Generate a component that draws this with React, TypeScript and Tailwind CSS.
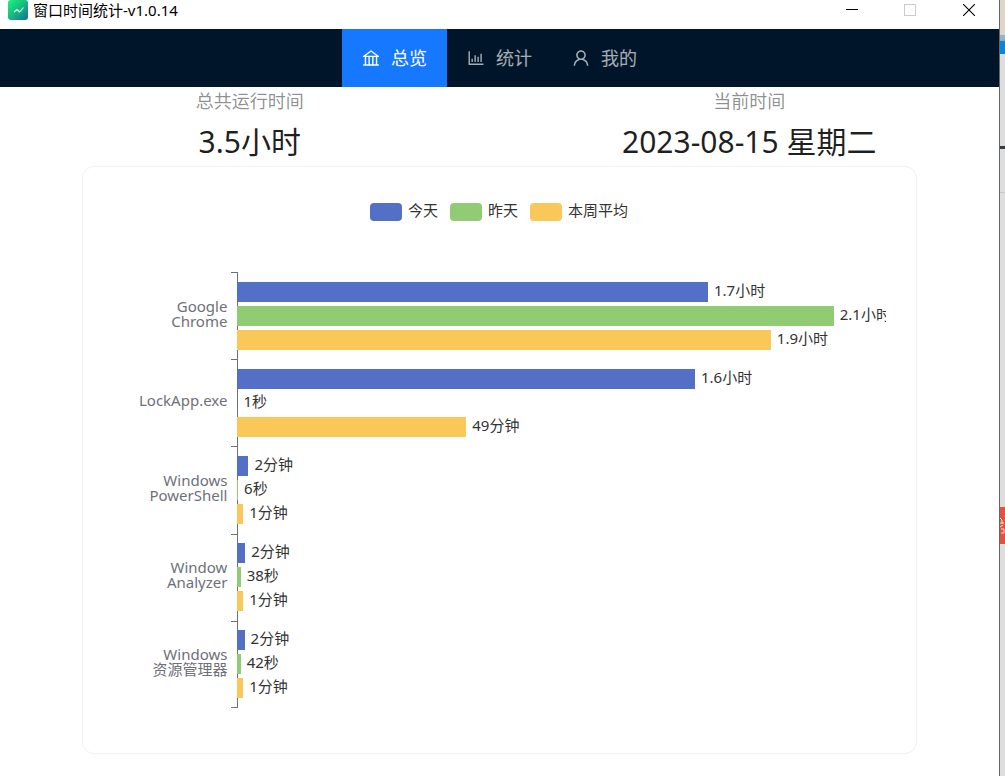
import { AiOutlineBank, AiOutlineBarChart, AiOutlineUser } from "react-icons/ai";
import clsx from "clsx";

const menu = [
  { label: "总览", icon: AiOutlineBank, active: true },
  { label: "统计", icon: AiOutlineBarChart, active: false },
  { label: "我的", icon: AiOutlineUser, active: false },
];

const stats = [
  { title: "总共运行时间", value: "3.5小时" },
  { title: "当前时间", value: "2023-08-15 星期二" },
];

const series = [
  { name: "今天", color: "bg-[#5470c6]" },
  { name: "昨天", color: "bg-[#91cc75]" },
  { name: "本周平均", color: "bg-[#fac858]" },
];

// one entry per series, width in percent of the plot area
const apps = [
  { name: ["Google", "Chrome"], bars: [{ w: 72.6, text: "1.7小时" }, { w: 92, text: "2.1小时" }, { w: 82.3, text: "1.9小时" }] },
  { name: ["LockApp.exe"], bars: [{ w: 70.6, text: "1.6小时" }, { w: 0, text: "1秒" }, { w: 35.3, text: "49分钟" }] },
  { name: ["Windows", "PowerShell"], bars: [{ w: 1.7, text: "2分钟" }, { w: 0.1, text: "6秒" }, { w: 0.9, text: "1分钟" }] },
  { name: ["Window", "Analyzer"], bars: [{ w: 1.2, text: "2分钟" }, { w: 0.5, text: "38秒" }, { w: 0.9, text: "1分钟" }] },
  { name: ["Windows", "资源管理器"], bars: [{ w: 1.1, text: "2分钟" }, { w: 0.5, text: "42秒" }, { w: 0.9, text: "1分钟" }] },
];

function AppLogo() {
  return (
    <svg className="w-5 h-5" viewBox="0 0 20 20">
      <defs>
        <linearGradient id="logo" x1="0" y1="0" x2="1" y2="1">
          <stop offset="0" stopColor="#1df47a" />
          <stop offset="0.5" stopColor="#17b97f" />
          <stop offset="1" stopColor="#146f9c" />
        </linearGradient>
      </defs>
      <rect width="20" height="20" rx="3" fill="url(#logo)" />
      <path d="M6 12 9 9.5 11.5 12 15.5 7.5" fill="none" stroke="#d8fff0" strokeWidth="1.1" />
    </svg>
  );
}

function TitleBar() {
  return (
    <header className="flex h-[29px] items-start justify-between overflow-hidden bg-white">
      <div className="flex items-center gap-[5px] pl-2">
        <AppLogo />
        <h1 className="text-[15px] leading-5 text-black">窗口时间统计-v1.0.14</h1>
      </div>
      <div className="flex">
        <button className="flex h-5 w-[58px] items-center justify-center" aria-label="最小化">
          <svg className="h-3 w-3" viewBox="0 0 12 12" shapeRendering="crispEdges">
            <path d="M0 5.5H12" stroke="#000" />
          </svg>
        </button>
        <button className="flex h-5 w-[58px] items-center justify-center" aria-label="最大化" disabled>
          <svg className="h-3 w-3" viewBox="0 0 12 12" shapeRendering="crispEdges">
            <path d="M.5.5h11v11H.5z" fill="none" stroke="#ccc" />
          </svg>
        </button>
        <button className="flex h-5 w-[60px] items-center justify-center" aria-label="关闭">
          <svg className="h-3 w-3" viewBox="0 0 12 12">
            <path d="M0 0 12 12M12 0 0 12" stroke="#000" strokeWidth="1.1" />
          </svg>
        </button>
      </div>
    </header>
  );
}

function Legend() {
  return (
    <ul className="flex justify-center gap-3">
      {series.map((s) => (
        <li key={s.name} className="flex items-start gap-1.5">
          <span className={clsx("mt-0.5 h-[18px] w-8 rounded", s.color)} />
          <span className="text-[15px] leading-[18px] text-[#333]">{s.name}</span>
        </li>
      ))}
    </ul>
  );
}

function Chart() {
  return (
    <div className="mt-[51px] flex h-[436px] flex-col overflow-hidden">
      {apps.map((app, row) => (
        <div key={row} className="flex flex-1">
          <div className="flex w-[115px] flex-col items-end justify-center pb-1 text-[15px] leading-[15px] text-[#6e7079]">
            {app.name.map((line) => (
              <span key={line}>{line}</span>
            ))}
          </div>
          <div className={clsx("ml-1 w-1.5 border-t border-[#6e7079]", row === apps.length - 1 && "border-b")} />
          <div className="flex min-w-0 flex-1 flex-col justify-center gap-1 border-l border-[#6e7079]">
            {app.bars.map((bar, i) => (
              <div key={i} className="-ml-px flex h-5 items-start gap-1.5">
                <div className={clsx("h-5 shrink-0", series[i].color)} style={{ width: `${bar.w}%` }} />
                <span className="whitespace-nowrap text-[15px] leading-4 text-[#333]">{bar.text}</span>
              </div>
            ))}
          </div>
        </div>
      ))}
    </div>
  );
}

// sliver of the desktop that shows past the window edge
function DesktopEdge() {
  return (
    <div className="flex w-1.5 shrink-0 flex-col border-l border-[#666] bg-[#dedede]">
      <div className="h-[35px] bg-[#dfd5cb]" />
      <div className="h-[5px] bg-[#93b5c8]" />
      <div className="h-px bg-[#a9a878]" />
      <div className="h-[13px] bg-[#0a84dc]" />
      <div className="mt-[92px] h-[3px] bg-[#343b45]" />
      <div className="mt-[43px] h-px bg-[#c8c8c8]" />
      <div className="mt-[314px] h-[37px] bg-[#e4513f]">
        <svg className="h-full w-full" viewBox="0 0 5 37" fill="none" stroke="#f7dcd6">
          <path d="M0 11l2 2M0 16h4M2 13v4M0 20l3-2M1 22h3v4H1" />
        </svg>
      </div>
    </div>
  );
}

export default function App() {
  return (
    <div className="flex min-h-screen bg-white font-['Noto_Sans','Noto_Sans_CJK_SC',sans-serif]">
      <div className="min-w-0 flex-1">
        <TitleBar />
        <nav className="flex h-[58px] justify-center bg-[#001529]">
          {menu.map((item) => (
            <a
              key={item.label}
              href="#"
              className={clsx(
                "flex items-center gap-2.5 pl-[19px] pr-5 text-lg",
                item.active ? "bg-[#1677ff] text-white" : "text-white/65"
              )}
            >
              <item.icon className="h-5 w-5" />
              <span>{item.label}</span>
            </a>
          ))}
        </nav>

        <main>
          <dl className="grid grid-cols-2 text-center">
            {stats.map((s) => (
              <div key={s.title}>
                <dt className="text-lg leading-7 text-black/45">{s.title}</dt>
                <dd className="pb-0.5 pt-1 text-3xl leading-[45px] text-black/88">{s.value}</dd>
              </div>
            ))}
          </dl>
          <section className="mx-auto mb-5 w-[83.5%] rounded-xl border border-[#f0f0f0] pb-[45px] pl-[29px] pr-[30px] pt-[34px]">
            <Legend />
            <Chart />
          </section>
        </main>
      </div>
      <DesktopEdge />
    </div>
  );
}
